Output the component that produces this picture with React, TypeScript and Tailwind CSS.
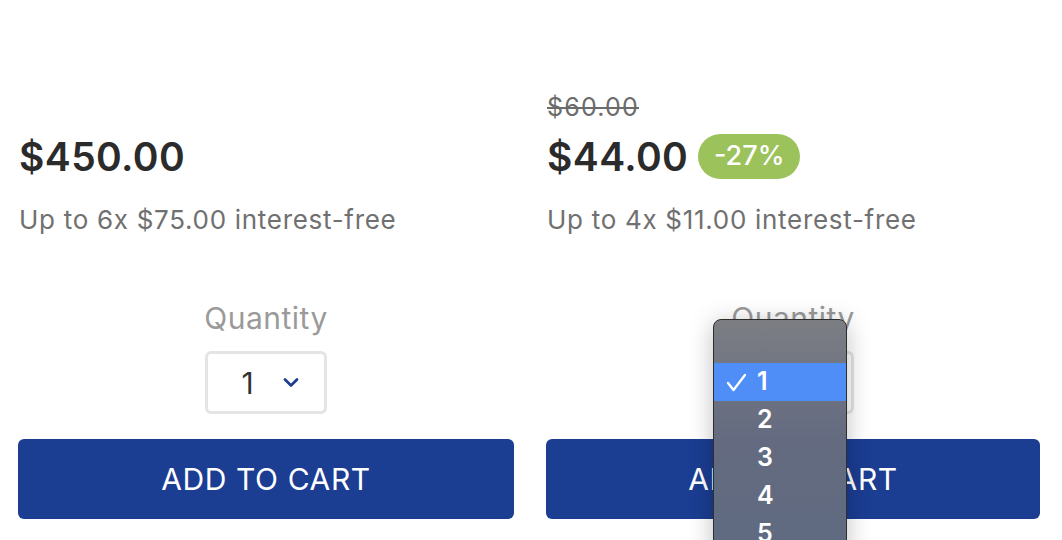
import React from "react";

function Chevron() {
  return (
    <svg width="16" height="11" viewBox="0 0 16 11" fill="none">
      <path d="M2 2.5 L8 8.5 L14 2.5" stroke="#1c3d92" strokeWidth="2.7" strokeLinecap="round" strokeLinejoin="round" />
    </svg>
  );
}

function QtySelect() {
  return (
    <div className="w-[122px] h-[63px] border-[3px] border-[#e4e4e4] rounded-[6px] bg-white flex items-center justify-center gap-[29px] pl-[8px]">
      <span className="text-[30px] leading-none text-[#333333]">1</span>
      <Chevron />
    </div>
  );
}

function Column({ strike, price, badge, sub, width }: { strike?: string; price: string; badge?: string; sub: string; width: string }) {
  return (
    <div className={`${width} flex flex-col`}>
      <div className="h-[30px] text-[25px] leading-[30px] tracking-[1.2px] text-[#6b6b6b] line-through pl-[1px]">{strike}</div>
      <div className="h-[50px] mt-[9px] flex items-center gap-[10px]">
        <span className="text-[39px] leading-none tracking-[0.4px] font-semibold text-[#2b2b2b] pl-[1px]">{price}</span>
        {badge && (
          <span className="h-[45px] w-[102px] rounded-full bg-[#9bc25b] text-white text-[27px] font-medium flex items-center justify-center">
            {badge}
          </span>
        )}
      </div>
      <div className="mt-[22px] text-[26px] leading-[34px] tracking-[0.7px] text-[#707070] pl-[1px]">{sub}</div>
      <div className="mt-[63px] text-[30px] leading-[36px] tracking-[0.5px] text-[#9a9a9a] text-center">Quantity</div>
      <div className="mt-[15px] flex justify-center">
        <QtySelect />
      </div>
      <button className="mt-[25px] h-[80px] w-full rounded-[6px] bg-[#1b3d92] text-white text-[30px] tracking-[0.6px]">
        ADD TO CART
      </button>
    </div>
  );
}

function Dropdown() {
  const items = [1, 2, 3, 4, 5];
  return (
    <div className="absolute left-[713px] top-[319px] w-[134px] h-[240px] rounded-t-[8px] border border-[#2e2e2e] overflow-hidden shadow-[0_4px_24px_rgba(0,0,0,0.25)] bg-gradient-to-b from-[#7c7e83] via-[#646b80] to-[#5f6a80]">
      <div className="h-[43px]" />
      {items.map((n) => (
        <div
          key={n}
          className={`h-[38px] flex items-center text-white text-[25px] font-semibold ${n === 1 ? "bg-[#4f8ef7]" : ""}`}
        >
          <span className="w-[43px] flex justify-center pl-[2px]">
            {n === 1 && (
              <svg width="21" height="19" viewBox="0 0 21 19" fill="none">
                <path d="M2 10 L7.5 17 L19 2" stroke="white" strokeWidth="2.3" strokeLinecap="round" strokeLinejoin="round" />
              </svg>
            )}
          </span>
          <span>{n}</span>
        </div>
      ))}
    </div>
  );
}

export default function App() {
  return (
    <div className="relative w-[1062px] h-[540px] overflow-hidden bg-white" style={{ fontFamily: "Inter, 'Noto Sans', sans-serif" }}>
      <div className="flex gap-[32px] pl-[18px] pt-[92px]">
        <Column width="w-[496px]" price="$450.00" sub="Up to 6x $75.00 interest-free" />
        <Column width="w-[494px]" strike="$60.00" price="$44.00" badge="-27%" sub="Up to 4x $11.00 interest-free" />
      </div>
      <Dropdown />
    </div>
  );
}
